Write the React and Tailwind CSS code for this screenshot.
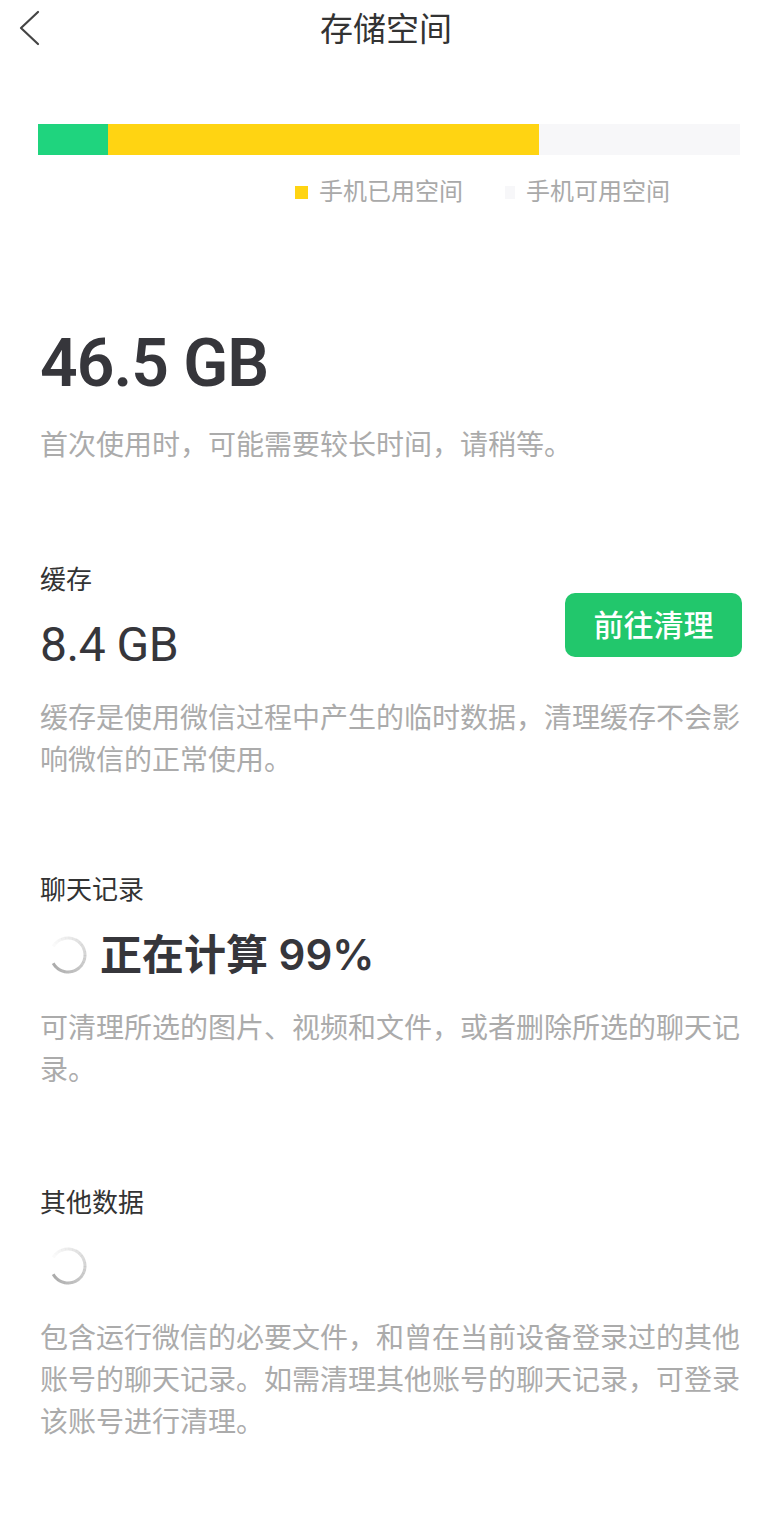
const cjk = "font-['Inter','Noto_Sans_CJK_SC',sans-serif]";
const num = "font-['Roboto','Noto_Sans_CJK_SC',sans-serif]";

// 转圈的加载图标，头部淡，尾部深
const Spinner = () => {
  const segs = 24;
  const start = 300;
  const span = 300;
  const r = 17;
  const pt = (deg) => {
    const a = ((deg - 90) * Math.PI) / 180;
    return [20 + r * Math.cos(a), 20 + r * Math.sin(a)];
  };
  return (
    <svg width="40" height="40" viewBox="0 0 40 40">
      {Array.from({ length: segs }).map((_, i) => {
        const a0 = start + (span / segs) * i;
        const a1 = a0 + span / segs + 0.6;
        const [x0, y0] = pt(a0);
        const [x1, y1] = pt(a1);
        return (
          <path
            key={i}
            d={`M${x0} ${y0} A${r} ${r} 0 0 1 ${x1} ${y1}`}
            fill="none"
            stroke="#8a8a8a"
            strokeWidth="3"
            opacity={0.04 + (0.7 * i) / segs}
          />
        );
      })}
    </svg>
  );
};

const Desc = ({ children, className = "" }) => (
  <p className={`text-[28px] leading-[42px] text-[#ababab] ${className}`}>{children}</p>
);

const Label = ({ children, className = "" }) => (
  <p className={`text-[26px] leading-[36px] text-[#333] ${className}`}>{children}</p>
);

export default function App() {
  return (
    <div className={`w-[780px] min-h-[1537px] bg-white ${cjk}`}>
      {/* 顶部标题栏 */}
      <div className="relative flex h-[58px] items-center justify-center pr-[8px]">
        <svg className="absolute left-[14px] top-[8px]" width="30" height="40" viewBox="0 0 30 40">
          <polyline points="24,4 7,20 24,36" fill="none" stroke="#444" strokeWidth="2.2" strokeLinecap="round" strokeLinejoin="round" />
        </svg>
        <h1 className="text-[33px] leading-none text-[#333]">存储空间</h1>
      </div>

      <div className="pl-[38px] pr-[40px]">
        {/* 存储条 */}
        <div className="mt-[66px] flex h-[31px] w-full">
          <div className="w-[70px] bg-[#1fd47e]" />
          <div className="w-[431px] bg-[#ffd412]" />
          <div className="flex-1 bg-[#f7f7f9]" />
        </div>
        <div className="mt-[25px] flex items-center justify-end gap-[42px] pr-[70px] text-[24px] leading-[24px] text-[#a9a9a9]">
          <div className="flex items-center gap-[11px]">
            <span className="h-[13px] w-[13px] bg-[#ffd412]" />
            <span>手机已用空间</span>
          </div>
          <div className="flex items-center gap-[11px]">
            <span className="h-[13px] w-[10px] bg-[#f7f7f9]" />
            <span>手机可用空间</span>
          </div>
        </div>
      </div>

      <div className="pl-[40px] pr-[35px]">
        <p className={`mt-[127px] text-[66px] font-semibold leading-[66px] tracking-[-1px] text-[#36363b] ${num}`}>46.5 GB</p>
        <Desc className="mt-[27px]">首次使用时，可能需要较长时间，请稍等。</Desc>

        {/* 缓存 */}
        <div className="mt-[96px] flex items-start justify-between">
          <div>
            <Label>缓存</Label>
            <p className={`mt-[23px] text-[48px] font-normal leading-[48px] tracking-[-0.5px] text-[#36363b] ${num}`}>8.4 GB</p>
          </div>
          <button className="mr-[3px] mt-[31px] h-[64px] w-[177px] rounded-[10px] bg-[#22c76c] text-[30px] font-medium text-white">
            前往清理
          </button>
        </div>
        <Desc className="mt-[28px]">缓存是使用微信过程中产生的临时数据，清理缓存不会影响微信的正常使用。</Desc>

        {/* 聊天记录 */}
        <Label className="mt-[91px]">聊天记录</Label>
        <div className="mt-[23px] flex h-[48px] items-center gap-[12px]">
          <div className="ml-[8px]">
            <Spinner />
          </div>
          <span className="text-[42px] font-semibold leading-[48px] text-[#36363b]">正在计算 99%</span>
        </div>
        <Desc className="mt-[28px]">可清理所选的图片、视频和文件，或者删除所选的聊天记录。</Desc>

        {/* 其他数据 */}
        <Label className="mt-[94px]">其他数据</Label>
        <div className="ml-[8px] mt-[25px]">
          <Spinner />
        </div>
        <Desc className="mt-[31px]">包含运行微信的必要文件，和曾在当前设备登录过的其他账号的聊天记录。如需清理其他账号的聊天记录，可登录该账号进行清理。</Desc>
      </div>
    </div>
  );
}
